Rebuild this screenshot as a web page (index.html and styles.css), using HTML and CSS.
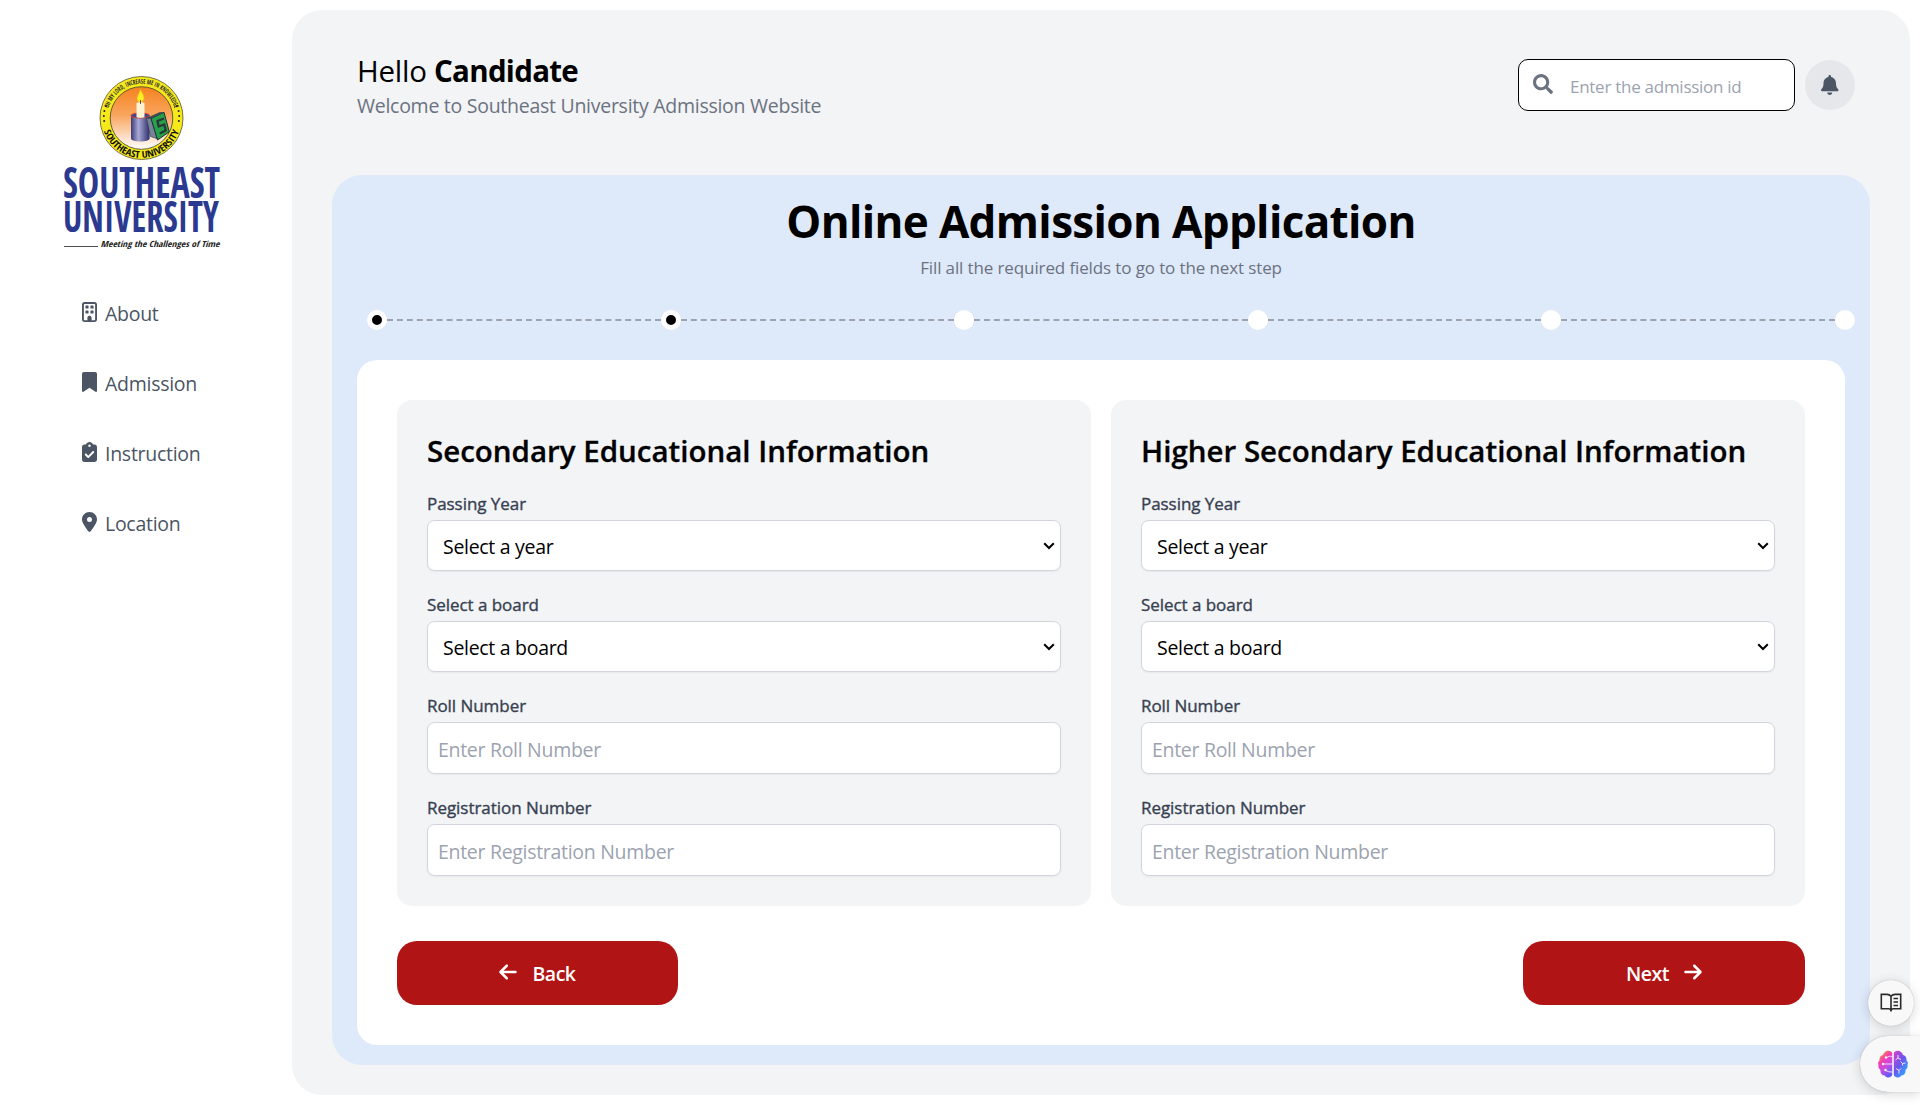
FILE: index.html
```html
<!DOCTYPE html>
<html lang="en">
<head>
<meta charset="utf-8">
<title>Online Admission Application</title>
<link rel="stylesheet" href="styles.css">
</head>
<body>
<div class="layout">
  <aside class="sidebar">
    <svg class="logo" viewBox="0 0 160 174" role="img" aria-label="Southeast University">
      <defs>
        <linearGradient id="sky" x1="0" y1="0" x2="0" y2="1"><stop offset="0" stop-color="#f58220"/><stop offset=".45" stop-color="#f9a55d"/><stop offset="1" stop-color="#fff"/></linearGradient>
        <linearGradient id="cup" x1="0" y1="0" x2="1" y2="0"><stop offset="0" stop-color="#3a3a78"/><stop offset=".4" stop-color="#a9a9d6"/><stop offset="1" stop-color="#2e2e6e"/></linearGradient>
        <path id="arc-top" d="M45.2 42A34.3 34.3 0 0 1 113.8 42"/>
        <path id="arc-bottom" d="M39.6 42A39.9 39.9 0 0 0 119.4 42"/>
      </defs>
      <circle cx="79.5" cy="42" r="41.5" fill="#f6e91b" stroke="#55532a" stroke-width=".8"/>
      <circle cx="79.5" cy="42" r="31.3" fill="url(#sky)" stroke="#55532a" stroke-width=".9"/>
      <text class="motto"><textPath href="#arc-top" startOffset="50%" text-anchor="middle" textLength="88" lengthAdjust="spacingAndGlyphs">OH MY LORD, INCREASE ME IN KNOWLEDGE</textPath></text>
      <text class="ring-name"><textPath href="#arc-bottom" startOffset="50%" text-anchor="middle" textLength="98" lengthAdjust="spacingAndGlyphs">SOUTHEAST UNIVERSITY</textPath></text>
      <g fill="#222"><circle cx="44" cy="30" r="1"/><circle cx="42.4" cy="35" r="1"/><circle cx="41.8" cy="40" r="1"/><circle cx="42.2" cy="45" r="1"/><circle cx="115" cy="30" r="1"/><circle cx="116.600" cy="35" r="1"/><circle cx="117.200" cy="40" r="1"/><circle cx="116.800" cy="45" r="1"/></g>
      <path d="M69 39.500v23c0 4 18.600 4 18.600 0v-23z" fill="url(#cup)"/>
      <ellipse cx="78.300" cy="39.500" rx="9.300" ry="2.600" fill="#454587" stroke="#d8402c" stroke-width=".9"/>
      <path d="M74.500 27c2-1 6-1 8 0v14c-2 1.200-6 1.200-8 0z" fill="#fdf3d4"/>
      <path d="M78.300 13c1.500 4 3.700 5.500 3.700 9 0 2.500-1.600 4-3.700 4s-3.200-1.500-3.200-3.700c0-3 2.700-5 3.200-9.300z" fill="#fcee21" stroke="#f7b61b" stroke-width=".6"/>
      <path d="M78.500 24v4" stroke="#333" stroke-width=".8"/>
      <path d="M84.500 42l4 18.500 7.500 2.500-4-20z" fill="#76839a" stroke="#2d3740" stroke-width=".6"/>
      <path d="M89 42.500l13-6.200 5.300 19.500L95.500 64z" fill="#25a04b" stroke="#202a30" stroke-width="1"/>
      <path d="M84.500 42l13.500-6 4 .3-13 6.200z" fill="#3f4b55"/>
      <path d="M102 42.500l-6.500 2.500 1.200 5.500 5.500-2 1.500 6-6 3" fill="none" stroke="#2a3535" stroke-width="2.200"/>
      <text class="wordmark" x="1" y="122" textLength="157" lengthAdjust="spacingAndGlyphs">SOUTHEAST</text>
      <text class="wordmark" x="1" y="156" textLength="156" lengthAdjust="spacingAndGlyphs">UNIVERSITY</text>
      <path d="M2 170.500h34" stroke="#222" stroke-width=".8"/>
      <text class="tagline" x="38.500" y="170.500" textLength="119" lengthAdjust="spacingAndGlyphs">Meeting the Challenges of Time</text>
    </svg>
    <nav class="nav">
      <a class="nav-link"><svg viewBox="0 0 384 512"><path d="M64 48c-8.800 0-16 7.200-16 16v384c0 8.800 7.200 16 16 16h80v-64c0-26.500 21.500-48 48-48s48 21.500 48 48v64h80c8.800 0 16-7.200 16-16V64c0-8.800-7.200-16-16-16H64zM0 64C0 28.700 28.700 0 64 0h256c35.300 0 64 28.700 64 64v384c0 35.300-28.700 64-64 64H64c-35.300 0-64-28.700-64-64V64zm88 40c0-8.800 7.200-16 16-16h48c8.800 0 16 7.200 16 16v48c0 8.800-7.200 16-16 16h-48c-8.800 0-16-7.200-16-16v-48zm144-16h48c8.800 0 16 7.200 16 16v48c0 8.800-7.200 16-16 16h-48c-8.800 0-16-7.200-16-16v-48c0-8.800 7.200-16 16-16zM88 232c0-8.800 7.200-16 16-16h48c8.800 0 16 7.200 16 16v48c0 8.800-7.200 16-16 16h-48c-8.800 0-16-7.200-16-16v-48zm144-16h48c8.800 0 16 7.200 16 16v48c0 8.800-7.200 16-16 16h-48c-8.800 0-16-7.200-16-16v-48c0-8.800 7.200-16 16-16z"/><path d="M144 400c0-26.500 21.500-48 48-48s48 21.500 48 48v72h-96z"/></svg>About</a>
      <a class="nav-link"><svg viewBox="0 0 384 512"><path d="M0 48v439.700C0 501.100 10.900 512 24.300 512c5 0 9.900-1.500 14-4.400L192 400l153.700 107.600c4.100 2.900 9 4.400 14 4.400 13.400 0 24.300-10.900 24.300-24.300V48c0-26.500-21.500-48-48-48H48C21.500 0 0 21.500 0 48z"/></svg>Admission</a>
      <a class="nav-link"><svg viewBox="0 0 384 512"><path d="M192 0c-41.800 0-77.400 26.700-90.500 64H64C28.700 64 0 92.700 0 128v320c0 35.300 28.700 64 64 64h256c35.300 0 64-28.700 64-64V128c0-35.300-28.700-64-64-64h-37.500C269.400 26.700 233.800 0 192 0zm0 64a32 32 0 1 1 0 64 32 32 0 1 1 0-64zm113 209L177 401c-9.400 9.400-24.600 9.400-33.900 0L79 337c-9.400-9.400-9.400-24.600 0-33.900s24.600-9.400 33.900 0l47 47L271 239c9.400-9.400 24.600-9.400 33.900 0s9.400 24.600 0 33.900z"/></svg>Instruction</a>
      <a class="nav-link"><svg viewBox="0 0 384 512"><path d="M215.700 499.200C267 435 384 279.400 384 192 384 86 298 0 192 0S0 86 0 192c0 87.400 117 243 168.300 307.200 12.300 15.300 35.100 15.300 47.400 0zM192 128a64 64 0 1 1 0 128 64 64 0 1 1 0-128z"/></svg>Location</a>
    </nav>
  </aside>

  <main class="main">
    <header class="topbar">
      <div>
        <h2 class="greeting">Hello <b>Candidate</b></h2>
        <p class="welcome">Welcome to Southeast University Admission Website</p>
      </div>
      <div class="tools">
        <label class="search">
          <svg viewBox="0 0 512 512"><path d="M505 442.700L405.300 343c-4.500-4.500-10.600-7-17-7H372c27.600-35.300 44-79.700 44-128C416 93.100 322.900 0 208 0S0 93.100 0 208s93.100 208 208 208c48.300 0 92.700-16.400 128-44v16.300c0 6.400 2.500 12.500 7 17l99.700 99.700c9.400 9.400 24.600 9.400 33.900 0l28.300-28.300c9.400-9.400 9.400-24.600.1-34zM208 336c-70.700 0-128-57.200-128-128 0-70.700 57.200-128 128-128 70.700 0 128 57.200 128 128 0 70.700-57.200 128-128 128z"/></svg>
          <input type="text" placeholder="Enter the admission id">
        </label>
        <span class="bell"><svg viewBox="0 0 448 512"><path d="M224 512c35.300 0 63.900-28.700 63.900-64H160.100c0 35.300 28.600 64 63.900 64zm215.400-149.700c-19.300-20.800-55.500-52-55.500-154.300 0-77.700-54.500-139.900-127.900-155.200V32c0-17.700-14.300-32-32-32s-32 14.300-32 32v20.800C118.600 68.100 64.100 130.300 64.100 208c0 102.300-36.200 133.500-55.500 154.300-6 6.400-8.700 14.100-8.600 21.700.1 16.400 13 32 32.100 32h383.800c19.100 0 32-15.600 32.100-32 .1-7.600-2.600-15.300-8.600-21.700z"/></svg></span>
      </div>
    </header>

    <section class="panel">
      <h1 class="title">Online Admission Application</h1>
      <p class="subtitle">Fill all the required fields to go to the next step</p>
      <div class="steps">
        <i class="dot done"></i><i class="line"></i><i class="dot done"></i><i class="line"></i><i class="dot"></i><i class="line"></i><i class="dot"></i><i class="line"></i><i class="dot"></i><i class="line"></i><i class="dot"></i>
      </div>

      <form class="form">
        <div class="cards">
          <fieldset class="card">
            <h3 class="card-title">Secondary Educational Information</h3>
            <label class="label">Passing Year</label>
            <select class="control"><option>Select a year</option></select>
            <label class="label">Select a board</label>
            <select class="control"><option>Select a board</option></select>
            <label class="label">Roll Number</label>
            <input class="control" type="text" placeholder="Enter Roll Number">
            <label class="label">Registration Number</label>
            <input class="control" type="text" placeholder="Enter Registration Number">
          </fieldset>
          <fieldset class="card">
            <h3 class="card-title">Higher Secondary Educational Information</h3>
            <label class="label">Passing Year</label>
            <select class="control"><option>Select a year</option></select>
            <label class="label">Select a board</label>
            <select class="control"><option>Select a board</option></select>
            <label class="label">Roll Number</label>
            <input class="control" type="text" placeholder="Enter Roll Number">
            <label class="label">Registration Number</label>
            <input class="control" type="text" placeholder="Enter Registration Number">
          </fieldset>
        </div>
        <div class="actions">
          <button class="btn" type="button"><svg viewBox="0 0 448 512"><path d="M9.400 233.400c-12.500 12.500-12.500 32.800 0 45.300l160 160c12.500 12.500 32.800 12.500 45.300 0s12.500-32.800 0-45.300L109.200 288H416c17.700 0 32-14.300 32-32s-14.300-32-32-32H109.300l105.300-105.400c12.500-12.500 12.500-32.800 0-45.300s-32.800-12.500-45.300 0l-160 160z"/></svg>Back</button>
          <button class="btn next" type="button">Next<svg viewBox="0 0 448 512"><path d="M438.600 278.600c12.500-12.500 12.500-32.800 0-45.300l-160-160c-12.500-12.500-32.800-12.500-45.300 0s-12.500 32.800 0 45.300L338.800 224H32c-17.700 0-32 14.300-32 32s14.300 32 32 32h306.700L233.400 393.400c-12.500 12.500-12.500 32.800 0 45.300s32.800 12.500 45.300 0l160-160z"/></svg></button>
        </div>
      </form>
    </section>
  </main>
</div>

<div class="float book">
  <svg viewBox="0 0 22 20"><g fill="none" stroke="#2b2b2b" stroke-width="1.600"><path d="M11 18.500V3.200C10 2 8.500 1.400 7 1.400H1.300v14.400h7.200c1.200 0 2.500.8 2.500 2.200 0-1.400 1.300-2.200 2.500-2.200h7.200V1.400H15c-1.500 0-3 .6-4 1.800"/><path d="M13.500 5.500h4.500M13.500 9h4.500M13.500 12.500h4.500" stroke-width="1.400"/></g></svg>
</div>
<div class="float assistant">
  <svg viewBox="0 0 30 28">
    <defs>
      <linearGradient id="lobe-left" x1=".2" y1="0" x2=".7" y2="1"><stop offset="0" stop-color="#f9a11f"/><stop offset=".35" stop-color="#f53cb4"/><stop offset=".65" stop-color="#c04be8"/><stop offset="1" stop-color="#5f5cf5"/></linearGradient>
      <linearGradient id="lobe-right" x1="0" y1="0" x2=".8" y2="1"><stop offset="0" stop-color="#dc3fc8"/><stop offset=".5" stop-color="#6c55ee"/><stop offset="1" stop-color="#23b4ff"/></linearGradient>
    </defs>
    <path fill="url(#lobe-left)" d="M14.200 3v22c-1 3-5.500 3.500-7.500.5C4 25.500 2 23 2.500 20 .5 18.500 0 16.500.6 15c-1-1.500-.5-3.500 1-4.500C1 8 2.500 5.500 5 5 6 .5 12-1 14.200 3z"/>
    <path fill="url(#lobe-right)" d="M15.800 3v22c1 3 5.500 3.500 7.500.5 2.700 0 4.700-2.500 4.200-5.500 2-1.500 2.500-3.500 1.900-5 1-1.500.5-3.500-1-4.500C29 8 27.500 5.500 25 5 24 .5 18-1 15.800 3z"/>
    <g fill="none" stroke="#f3dcff" stroke-width="1"><path d="M14 6.500c-2-.5-3.500-.3-5 1M5.500 14H14M14 22c-3 0-5-.5-6.500-2M20 5v3l-2.500 2M20 8l3 1.500M27.500 13l-3 .5-2-2M24.500 13.500v2M18 18.500l3 2 2-2M21 20.500v3"/></g>
    <g fill="#fff"><circle cx="8" cy="7.500" r="1.200"/><circle cx="5" cy="14" r="1.200"/><circle cx="7.500" cy="20" r="1.200"/></g>
  </svg>
</div>
</body>
</html>
```
FILE: styles.css
```css
* { box-sizing: border-box; margin: 0; padding: 0; }

body {
  height: 1105px;
  overflow: hidden;
  background: #fff;
  color: #000;
  font: 400 19.500px "Open Sans", "Noto Sans", sans-serif;
  letter-spacing: -.27px;
}

svg { display: block; fill: currentColor; }

.layout { display: flex; height: 100%; padding: 10px 10px 10px 0; }

/* Sidebar */
.sidebar { width: 292px; padding: 66px 0 0 62px; }
.logo { width: 160px; height: 174px; overflow: visible; letter-spacing: 0; }
.motto { font: 600 6.600px "Open Sans Condensed", "Open Sans", sans-serif; fill: #333; }
.ring-name { font: 700 9.500px "Open Sans Condensed", "Open Sans", sans-serif; fill: #111; }
.wordmark { font: 700 42.500px "Open Sans Condensed", "Roboto Condensed", sans-serif; fill: #2b3990; }
.tagline { font: italic 700 8.500px "Open Sans Condensed", "Open Sans", sans-serif; fill: #222; }

.nav { display: flex; flex-direction: column; gap: 40px; margin-top: 48px; padding-left: 20px; }
.nav-link { display: flex; align-items: center; gap: 8px; height: 30px; color: #4b5563; }
.nav-link svg { width: 15px; height: 20px; margin-bottom: 2px; }

/* Main area */
.main { width: 1618px; padding: 38px 40px 30px; border-radius: 30px; background: #f3f4f6; }

.topbar { display: flex; justify-content: space-between; height: 127px; padding: 0 15px 0 25px; }
.greeting { font-size: 29.500px; font-weight: 400; line-height: 45px; }
.greeting b { font-weight: 700; letter-spacing: -.700px; }
.welcome { color: #6b7280; line-height: 25px; }
.tools { display: flex; gap: 10px; padding-top: 11px; }
.search {
  display: flex; align-items: center; gap: 17px;
  width: 277px; height: 52px; padding: 0 14px;
  border: 1px solid #000; border-radius: 10px; background: #fff;
}
.search svg { flex: none; width: 20px; height: 20px; margin-bottom: 2px; color: #6b7280; }
.search input { width: 200px; padding-top: 2px; border: 0; background: none; font: inherit; font-size: 17px; letter-spacing: -.27px; }
::placeholder { color: #9ca3af; opacity: 1; }
.bell {
  display: grid; place-items: center;
  width: 50px; height: 50px; margin-top: 1px;
  border-radius: 50%; background: #e5e7eb; color: #4b5563;
}
.bell svg { width: 17.500px; height: 20px; margin-bottom: 1px; }

/* Application panel */
.panel { height: 890px; padding: 19px 25px 21px; border-radius: 30px; background: #dee9fa; text-align: center; }
.title { font-size: 44px; font-weight: 700; line-height: 55px; letter-spacing: -.650px; }
.subtitle { margin-top: 1px; color: #6b7280; font-size: 17px; line-height: 36px; letter-spacing: -.12px; }

.steps { display: flex; align-items: center; height: 20px; margin: 24px -10px 0 10px; }
.dot { flex: none; width: 20px; height: 20px; border-radius: 50%; background: #fff; }
.done { border: 5px solid #fff; background: #000; }
.line { flex: 1; border-top: 2px dashed #9ca3af; }

.form { height: 685px; margin-top: 30px; padding: 40px; border-radius: 20px; background: #fff; text-align: left; }
.cards { display: grid; grid-template-columns: 1fr 1fr; gap: 20px; }
.card { min-width: 0; height: 506px; padding: 30px; border: 0; border-radius: 15px; background: #f3f4f6; }
.card-title { margin-bottom: 20px; font-size: 29.500px; font-weight: 600; line-height: 41px; letter-spacing: 0; white-space: nowrap; -webkit-text-stroke: .3px; }
.label { display: block; margin-bottom: 4px; color: #374151; font-size: 17px; font-weight: 500; line-height: 25px; letter-spacing: -.05px; -webkit-text-stroke: .35px; }
.control {
  display: block; width: 100%; height: 52px; margin-bottom: 21px; padding: 2px 10px 0;
  border: 1px solid #d1d5db; border-radius: 7.500px;
  background-color: #fff; box-shadow: 0 1px 2px rgba(0, 0, 0, .05);
  color: #000; font: inherit; letter-spacing: -.3px;
}
select.control {
  height: 51px; padding: 2px 15px 0; appearance: none;
  background: #fff url("data:image/svg+xml,%3Csvg xmlns='http://www.w3.org/2000/svg' width='12' height='8'%3E%3Cpath d='M1.200 1.200L6 6l4.800-4.800' fill='none' stroke='%23000' stroke-width='2'/%3E%3C/svg%3E") no-repeat right 5px top 21px;
}

.actions { display: flex; justify-content: space-between; margin-top: 35px; }
.btn {
  display: flex; align-items: center; justify-content: center; gap: 15px;
  width: 281px; height: 64px; border: 0; border-radius: 20px;
  background: #b11414; color: #fff; font: inherit; font-weight: 600; letter-spacing: -.5px;
}
.next { width: 282px; }
.btn svg { width: 18px; height: 20px; margin-bottom: 2px; }

/* Floating assistant buttons overlaying the page */
.float { position: absolute; display: flex; align-items: center; background: #f8f8f8; box-shadow: 0 2px 12px rgba(0, 0, 0, .16), 0 0 1px rgba(0, 0, 0, .3); }
.book { right: 6px; top: 980px; width: 46px; height: 46px; border-radius: 50%; justify-content: center; }
.book svg { width: 22px; height: 20px; }
.assistant { right: 0; top: 1036px; width: 60px; height: 56px; padding-left: 18px; border-radius: 28px 0 0 28px; }
.assistant svg { width: 30px; height: 28px; }
```
